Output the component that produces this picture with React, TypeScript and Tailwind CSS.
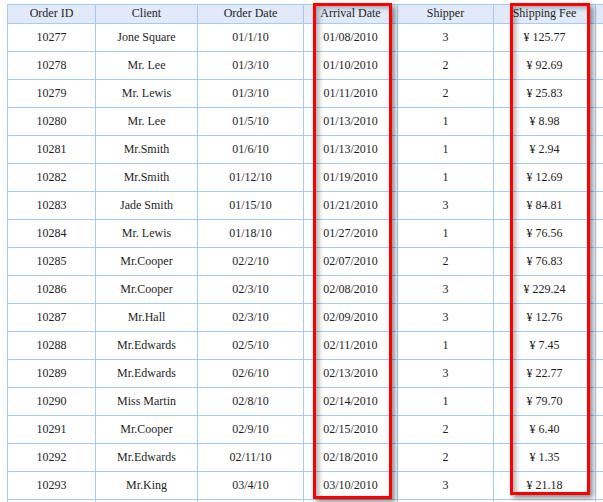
const rows = [
  ["10277", "Jone Square", "01/1/10", "01/08/2010", "3", "125.77"],
  ["10278", "Mr. Lee", "01/3/10", "01/10/2010", "2", "92.69"],
  ["10279", "Mr. Lewis", "01/3/10", "01/11/2010", "2", "25.83"],
  ["10280", "Mr. Lee", "01/5/10", "01/13/2010", "1", "8.98"],
  ["10281", "Mr.Smith", "01/6/10", "01/13/2010", "1", "2.94"],
  ["10282", "Mr.Smith", "01/12/10", "01/19/2010", "1", "12.69"],
  ["10283", "Jade Smith", "01/15/10", "01/21/2010", "3", "84.81"],
  ["10284", "Mr. Lewis", "01/18/10", "01/27/2010", "1", "76.56"],
  ["10285", "Mr.Cooper", "02/2/10", "02/07/2010", "2", "76.83"],
  ["10286", "Mr.Cooper", "02/3/10", "02/08/2010", "3", "229.24"],
  ["10287", "Mr.Hall", "02/3/10", "02/09/2010", "3", "12.76"],
  ["10288", "Mr.Edwards", "02/5/10", "02/11/2010", "1", "7.45"],
  ["10289", "Mr.Edwards", "02/6/10", "02/13/2010", "3", "22.77"],
  ["10290", "Miss Martin", "02/8/10", "02/14/2010", "1", "79.70"],
  ["10291", "Mr.Cooper", "02/9/10", "02/15/2010", "2", "6.40"],
  ["10292", "Mr.Edwards", "02/11/10", "02/18/2010", "2", "1.35"],
  ["10293", "Mr.King", "03/4/10", "03/10/2010", "3", "21.18"],
];

const headers = ["Order ID", "Client", "Order Date", "Arrival Date", "Shipper", "Shipping Fee"];

export default function App() {
  return (
    <div
      className="relative w-[603px] h-[502px] overflow-hidden bg-white pl-[7px] pt-[4px] text-[12px] text-[#1e1e1e]"
      style={{ fontFamily: '"Liberation Serif", "Times New Roman", serif' }}
    >
      <div className="grid grid-cols-[88px_102px_106px_94px_96px_102px_20px] border-l border-t border-[#a3cbf3]">
        {headers.map((h) => (
          <div
            key={h}
            className="h-[19px] flex items-center justify-center pb-[2px] bg-[#e2e9f8] border-r border-b border-[#a3cbf3] leading-none"
          >
            {h}
          </div>
        ))}
        <div className="h-[19px] bg-[#e2e9f8] border-b border-[#a3cbf3]" />

        {rows.map((r) => (
          <Row key={r[0]} r={r} />
        ))}
        {[0, 1, 2, 3, 4, 5].map((i) => (
          <div key={i} className="h-[28px] border-r border-[#a3cbf3]" />
        ))}
        <div className="h-[28px]" />
      </div>

      {/* highlight boxes */}
      <div className="absolute left-[313px] top-[3px] w-[79px] h-[496px] border-[3px] border-[#ff0000] shadow-[3px_3px_5px_rgba(0,0,0,0.45),inset_3px_2px_5px_rgba(0,0,0,0.3)]" />
      <div className="absolute left-[510px] top-[3px] w-[80px] h-[492px] border-[3px] border-[#ff0000] shadow-[3px_3px_5px_rgba(0,0,0,0.45),inset_3px_2px_5px_rgba(0,0,0,0.3)]" />
    </div>
  );
}

function Row({ r }: { r: string[] }) {
  return (
    <>
      {r.map((c, i) => (
        <div
          key={i}
          className="h-[28px] flex items-center justify-center pb-[2px] border-r border-b border-[#a3cbf3] leading-none"
        >
          {i === 5 ? `¥ ${c}` : c}
        </div>
      ))}
      <div className="h-[28px] border-b border-[#a3cbf3]" />
    </>
  );
}
